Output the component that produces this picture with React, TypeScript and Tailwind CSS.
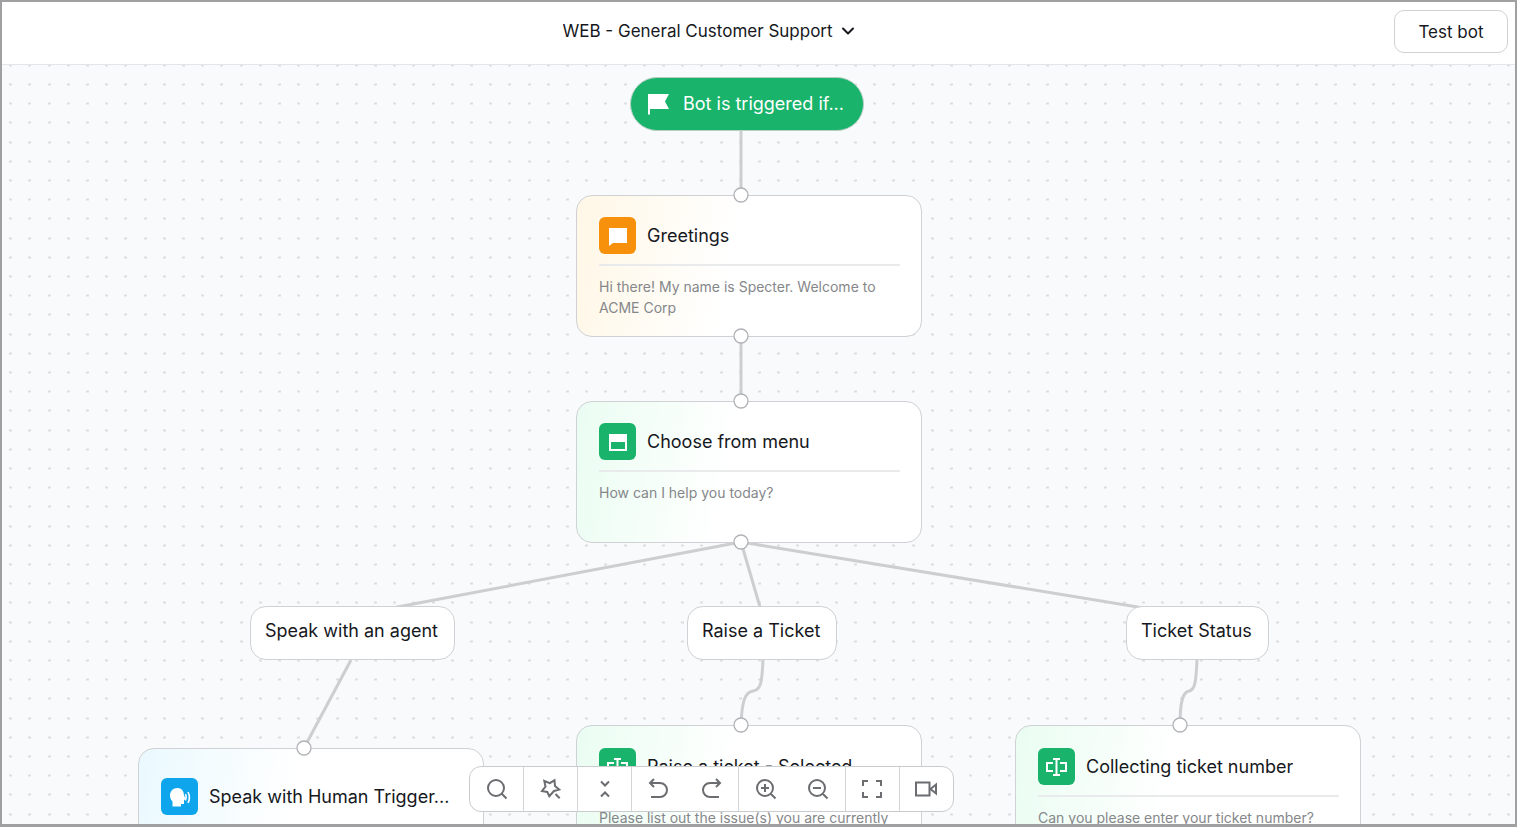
import React from 'react';
import { FiChevronDown } from 'react-icons/fi';

type Tone = 'orange' | 'green' | 'blue';

const tones: Record<Tone, { card: string; icon: string }> = {
  orange: { card: 'from-[#fff7e6]', icon: 'bg-[#f7900a]' },
  green: { card: 'from-[#eafdf2]', icon: 'bg-[#19b36b]' },
  blue: { card: 'from-[#eaf9fe]', icon: 'bg-[#0ea5ec]' },
};

const ChatIcon = () => (
  <svg viewBox="0 0 24 24" className="size-6" fill="#fff" aria-hidden="true">
    <path d="M3 4h18v15H7l-4 3z" />
  </svg>
);

const MenuIcon = () => (
  <svg viewBox="0 0 24 24" className="size-6" aria-hidden="true">
    <path fill="#fff" fillRule="evenodd" d="M3 4h18v17H3zM5 12v7h14v-7z" />
  </svg>
);

const InputIcon = () => (
  <svg viewBox="0 0 24 24" className="size-6" fill="none" stroke="#fff" strokeWidth="2" aria-hidden="true">
    <path d="M8 8H2v8h6M15 8h6v8h-6M11.500 4v16M8 4h7M8 20h7" />
  </svg>
);

const SpeakIcon = () => (
  <svg viewBox="0 0 24 24" className="size-6" aria-hidden="true">
    <path
      fill="#fff"
      d="M9.500 3C5 3 2 6 2 10.500c0 2.500 1 4.500 2.500 6V21.500H13V19h3v-4l2-1-2-3.500C16 6 13.500 3 9.500 3z"
    />
    <path fill="none" stroke="#fff" strokeWidth="1.600" d="M17.500 9c1 2 1 4.500 0 6.500M20 7c1.800 3.500 1.800 7.500 0 11" />
  </svg>
);

const FlagIcon = () => (
  <svg viewBox="0 0 24 24" className="size-6" fill="#fff" aria-hidden="true">
    <path d="M1 2h21l-4 7.500L22 17H3v5.500H1z" />
  </svg>
);

interface NodeProps {
  title: string;
  text?: string;
  tone: Tone;
  icon: React.ReactNode;
  position: string;
  pad?: string;
}

const NodeCard: React.FC<NodeProps> = ({ title, text, tone, icon, position, pad = 'pt-[21px]' }) => (
  <article
    className={`absolute h-[142px] w-[346px] rounded-2xl border border-[#cfd1d4] bg-linear-100 ${tones[tone].card} to-white to-45% pr-[21px] pl-[22px] ${pad} ${position}`}
  >
    <div className="flex items-center gap-[11px]">
      <span className={`flex size-[37px] shrink-0 items-center justify-center rounded-md ${tones[tone].icon}`}>
        {icon}
      </span>
      <h2 className="truncate text-[18px] leading-6 text-[#16181d]">{title}</h2>
    </div>
    {text && (
      <p className="mt-[10px] border-t-2 border-[#e9eaec] pt-[10px] text-[14px] leading-[21px] text-[#85878a]">{text}</p>
    )}
  </article>
);

const Branch: React.FC<{ label: string; position: string }> = ({ label, position }) => (
  <div
    className={`absolute h-[54px] rounded-2xl border border-[#cfd1d4] bg-white pt-3 pr-4 pl-[14px] text-[18px] leading-6 whitespace-nowrap text-[#16181d] ${position}`}
  >
    {label}
  </div>
);

const edges = [
  'M739 65V130',
  'M739 272V336',
  'M739 477L390 543',
  'M739 477L758 542',
  'M739 477L1148 544',
  'M349 595L302 683',
  'M761 595C760 617 759 625 751 626C743 627 740 636 739 660',
  'M1195 595C1194 617 1193 625 1187 626C1181 627 1178 636 1178 660',
];

const handles = [
  [739, 130],
  [739, 271],
  [739, 336],
  [739, 477],
  [302, 683],
  [739, 660],
  [1178, 660],
];

// Five by five dots per 96px tile
const dotColumns = [8, 27, 47, 66, 85];
const dotRows = [1, 20, 39, 58, 78];

const Grid = () => (
  <svg className="absolute inset-0 size-full" aria-hidden="true">
    <defs>
      <pattern id="dots" y="-1" width="96" height="96" patternUnits="userSpaceOnUse">
        {dotRows.map((y) =>
          dotColumns.map((x) => (
            <g key={`${x}-${y}`}>
              <path fill="#ebecee" d={`M${x - 1} ${y - 1}h3v3h-3z`} />
              <path fill="#dddee0" d={`M${x - 1} ${y}h3v1h-3z`} />
            </g>
          ))
        )}
      </pattern>
    </defs>
    <rect width="100%" height="100%" fill="url(#dots)" />
    <g fill="none" stroke="#cccecf" strokeWidth="3">
      {edges.map((d) => (
        <path key={d} d={d} />
      ))}
    </g>
  </svg>
);

const Handles = () => (
  <svg className="pointer-events-none absolute inset-0 size-full" aria-hidden="true">
    {handles.map(([x, y]) => (
      <circle key={`${x}-${y}`} cx={x} cy={y} r="7" fill="#fff" stroke="#b0b2b6" strokeWidth="1.300" />
    ))}
  </svg>
);

const tools = [
  [{ label: 'Search', d: 'M11 3a8 8 0 1 0 0 16a8 8 0 1 0 0-16M16.500 16.500L21.500 21.500' }],
  [
    {
      label: 'Highlight',
      d: 'M5.300 4L10.800 6.200L15.500 3.300L16 9L20.200 12.500L15 14L10.300 19.200L8.300 15L3 14L6.500 9.500zM16.500 17L20.700 21.200',
    },
  ],
  [{ label: 'Collapse', d: 'M8 4.500L12 8.500L16 4.500M8 19.500L12 15.500L16 19.500' }],
  [
    { label: 'Undo', d: 'M7 2L3 6L7 10M3 6H13a7 7 0 0 1 0 14H4' },
    { label: 'Redo', d: 'M16 2L20 6L16 10M20 6H10a7 7 0 0 0 0 14H19' },
  ],
  [
    { label: 'Zoom in', d: 'M11 3a8 8 0 1 0 0 16a8 8 0 1 0 0-16M16.500 16.500L21.500 21.500M11 7v8M7 11h8' },
    { label: 'Zoom out', d: 'M10 3a8 8 0 1 0 0 16a8 8 0 1 0 0-16M15.500 16.500L20.500 21.500M6 11h8' },
  ],
  [{ label: 'Fit to screen', d: 'M2 9V4H7M15 4H20V9M20 15V20H15M7 20H2V15' }],
  [{ label: 'Record', d: 'M1 5.500H14.500V18.500H1zM15.500 12L21 7.500V16.500z' }],
];

const Toolbar = () => (
  <div className="absolute inset-x-0 bottom-3 flex justify-center pr-[94px]">
    <div className="flex h-[46px] divide-x divide-[#d3d5d8] overflow-hidden rounded-xl border border-[#c9cbce] bg-white">
      {tools.map((group) => (
        <div key={group[0].label} className="flex">
          {group.map((tool) => (
            <button
              key={tool.label}
              type="button"
              aria-label={tool.label}
              className="flex w-[53px] items-center justify-center hover:bg-gray-50"
            >
              <svg viewBox="0 0 24 24" className="size-6" fill="none" stroke="#6b6d70" strokeWidth="2">
                <path d={tool.d} />
              </svg>
            </button>
          ))}
        </div>
      ))}
    </div>
  </div>
);

const App: React.FC = () => {
  return (
    <div className="flex h-screen flex-col overflow-hidden border-2 border-b-3 border-[#a0a0a2] bg-white font-['Inter',sans-serif]">
      {/* Header */}
      <header className="flex h-[63px] shrink-0 items-center border-b border-[#e3e5e8] pr-[7px] pb-1">
        <div className="flex flex-1 justify-center pl-5">
          <div className="relative flex items-center">
            <select
              aria-label="Bot"
              className="appearance-none bg-transparent pr-5 text-[17px] leading-6 text-[#16181d]"
            >
              <option>WEB - General Customer Support</option>
            </select>
            <FiChevronDown className="pointer-events-none absolute -right-1 size-5 stroke-[2.4] text-[#16181d]" />
          </div>
        </div>
        <button
          type="button"
          className="h-[43px] w-[114px] rounded-[10px] border border-[#cfd1d4] bg-white pt-[3px] text-[17px] text-[#16181d]"
        >
          Test bot
        </button>
      </header>

      {/* Canvas */}
      <main className="relative flex-1 overflow-hidden bg-[#f9fafc]">
        <Grid />

        <div className="absolute top-3 left-[628px] flex h-[54px] w-[234px] items-center gap-3 rounded-full border border-[#b5cfc2] bg-[#19b36b] pb-px pl-4 text-[18px] whitespace-nowrap text-white">
          <FlagIcon />
          Bot is triggered if...
        </div>

        <NodeCard
          title="Greetings"
          text="Hi there! My name is Specter. Welcome to ACME Corp"
          tone="orange"
          icon={<ChatIcon />}
          position="top-[130px] left-[574px]"
        />
        <NodeCard
          title="Choose from menu"
          text="How can I help you today?"
          tone="green"
          icon={<MenuIcon />}
          position="top-[336px] left-[574px]"
        />

        <Branch label="Speak with an agent" position="top-[541px] left-[248px]" />
        <Branch label="Raise a Ticket" position="top-[541px] left-[685px]" />
        <Branch label="Ticket Status" position="top-[541px] left-[1124px]" />

        <NodeCard
          title="Speak with Human Trigger..."
          tone="blue"
          icon={<SpeakIcon />}
          position="top-[683px] left-[136px]"
          pad="pt-[29px]"
        />
        <NodeCard
          title="Raise a ticket - Selected"
          text="Please list out the issue(s) you are currently facing"
          tone="green"
          icon={<InputIcon />}
          position="top-[660px] left-[574px]"
          pad="pt-[22px]"
        />
        <NodeCard
          title="Collecting ticket number"
          text="Can you please enter your ticket number?"
          tone="green"
          icon={<InputIcon />}
          position="top-[660px] left-[1013px]"
          pad="pt-[22px]"
        />

        <Handles />
        <Toolbar />
      </main>
    </div>
  );
};

export default App;
